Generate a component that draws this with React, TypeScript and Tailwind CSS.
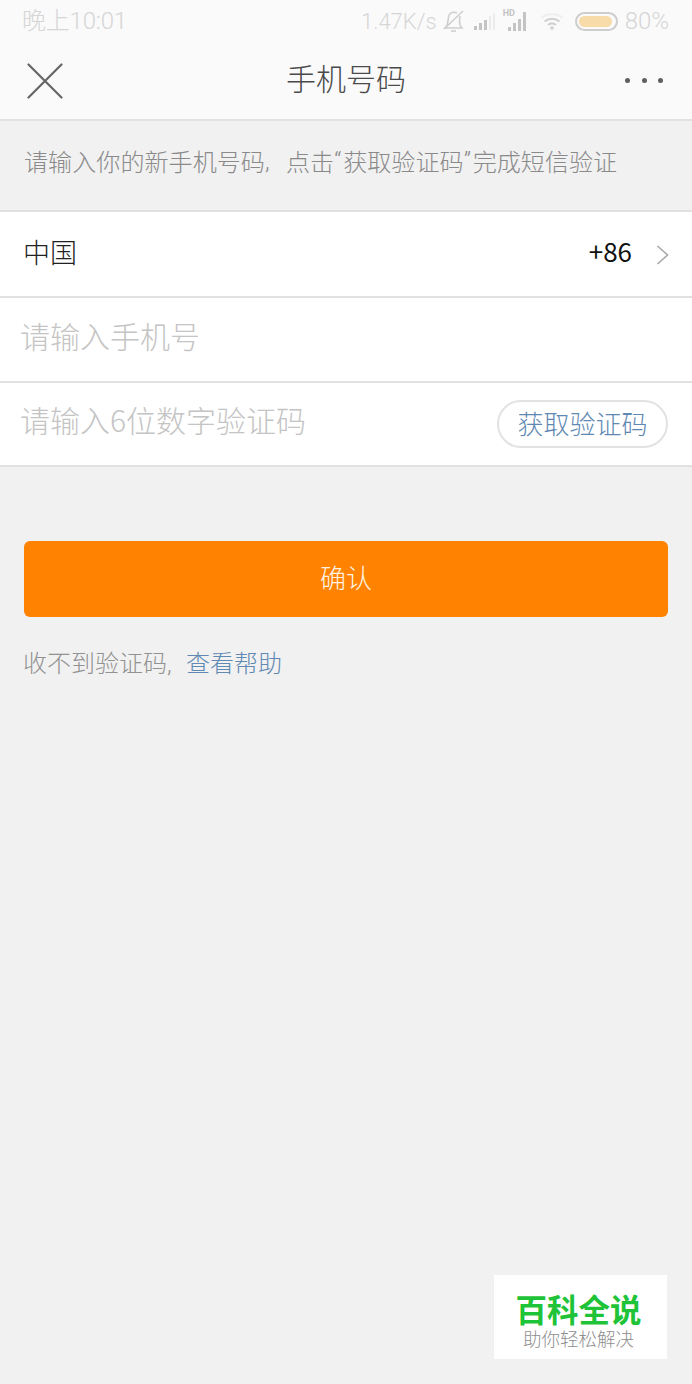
const StatusBar = () => (
  <div className="h-[42px] flex items-center justify-between pl-[22px] pr-[23px] text-[24px] text-[#d6d6d6] font-light font-['Roboto','Noto_Sans_CJK_SC',sans-serif]">
    <span className="-tracking-[0.2px]">晚上10:01</span>
    <div className="flex items-center">
      <span className="text-[22px]">1.47K/s</span>
      {/* bell off */}
      <svg width="24" height="24" viewBox="0 0 24 24" fill="none" stroke="#cfcfcf" strokeWidth="1.600" className="ml-[5px]">
        <path d="M2 20 L21 2" />
        <path d="M2 19 h18 c-2-2-2.500-4-2.500-7 l0.500-5 M15 4 c-4-2-8 0-8.500 4 c-0.300 4-1 8-3 11" />
        <path d="M9 22 h5" />
      </svg>
      {/* signal 1 */}
      <svg width="24" height="20" viewBox="0 0 24 20" className="ml-[7px]">
        <rect x="1" y="15" width="3" height="4" fill="#c4c4c4" />
        <rect x="6" y="12" width="3" height="7" fill="#c4c4c4" />
        <rect x="11" y="9" width="3" height="10" fill="#c4c4c4" />
        <rect x="16" y="5" width="2" height="14" fill="#ececec" />
        <rect x="20" y="2" width="2" height="17" fill="#ececec" />
      </svg>
      {/* signal 2 with HD */}
      <div className="relative w-[26px] h-[24px] ml-[6px]">
        <span className="absolute left-0 top-[-2px] text-[9px] leading-[12px] font-bold text-[#c4c4c4]">HD</span>
        <svg width="26" height="24" viewBox="0 0 26 24" className="absolute inset-0">
          <rect x="5" y="18" width="3" height="4" fill="#c4c4c4" />
          <rect x="10" y="14" width="3" height="8" fill="#c4c4c4" />
          <rect x="15" y="10" width="3" height="12" fill="#c4c4c4" />
          <rect x="20" y="3" width="3" height="19" fill="#c4c4c4" />
        </svg>
      </div>
      {/* wifi */}
      <svg width="26" height="20" viewBox="0 0 26 20" fill="none" className="ml-[10px]">
        <path d="M2 7 C8 2 18 2 24 7" stroke="#eeeeee" strokeWidth="2" />
        <path d="M5.500 10.500 C10 6.800 16 6.800 20.500 10.500" stroke="#cfcfcf" strokeWidth="2" />
        <path d="M9 14 C11.500 12 14.500 12 17 14" stroke="#cfcfcf" strokeWidth="2" />
        <circle cx="13" cy="17" r="1.800" fill="#cfcfcf" />
      </svg>
      {/* battery */}
      <div className="ml-[10px] w-[43px] h-[19px] rounded-full border-2 border-[#cdcdcd] p-[2px]">
        <div className="w-[33px] h-full rounded-full bg-[#f7dca9]" />
      </div>
      <span className="ml-[7px] text-[24px]">80%</span>
    </div>
  </div>
);

const NavBar = () => (
  <div className="h-[79px] flex items-center justify-between pl-[27px] pr-[29px] border-b-2 border-[#e1e1e1]">
    <svg width="36" height="36" viewBox="0 0 36 36" stroke="#666666" strokeWidth="2.200" strokeLinecap="round">
      <path d="M1.500 1.500 L34.500 34.500 M34.500 1.500 L1.500 34.500" />
    </svg>
    <span className="text-[30px] leading-none text-[#4a4a4a] font-light mb-[8px] ml-[4px]">手机号码</span>
    <div className="flex items-center gap-[11.500px]">
      <div className="w-[5px] h-[5px] rounded-full bg-[#5f5f5f]" />
      <div className="w-[5px] h-[5px] rounded-full bg-[#5f5f5f]" />
      <div className="w-[5px] h-[5px] rounded-full bg-[#5f5f5f]" />
    </div>
  </div>
);

const App = () => {
  return (
    <div className="relative w-[692px] h-[1384px] bg-[#f1f1f1] overflow-hidden font-['Noto_Sans_CJK_SC','Noto_Sans',sans-serif]">
      <div className="bg-[#fafafa]">
        <StatusBar />
        <NavBar />
      </div>

      {/* hint */}
      <div className="h-[89px] flex items-center pl-[24px] pb-[8px] text-[24.100px] text-[#8a8a8a] font-light whitespace-nowrap">
        请输入你的新手机号码
        <span className="inline-block w-[21px] font-['Roboto']">,</span>
        点击
        <span className="inline-block w-[9px] font-['Roboto']">“</span>
        获取验证码
        <span className="inline-block w-[9px] font-['Roboto']">”</span>
        完成短信验证
      </div>

      {/* form */}
      <div className="bg-white border-t-2 border-[#e1e1e1]">
        <div className="h-[86px] flex items-center justify-between pl-[23px] pr-[23px] border-b-2 border-[#e1e1e1]">
          <span className="text-[27px] text-[#222222] font-light mb-[4px]">中国</span>
          <div className="flex items-center mb-[8px]">
            <span className="text-[26px] text-[#111111]">+86</span>
            <svg width="13" height="20" viewBox="0 0 13 20" fill="none" stroke="#a8a8a8" strokeWidth="1.600" className="ml-[24px] mt-[10px]">
              <path d="M1.500 1 L11.500 10 L1.500 19" />
            </svg>
          </div>
        </div>
        <div className="h-[85px] flex items-center pl-[20px] border-b-2 border-[#e1e1e1]">
          <span className="text-[30px] text-[#c4c4c4] font-light mb-[8px]">请输入手机号</span>
        </div>
        <div className="h-[84px] flex items-center justify-between pl-[20px] pr-[24px] border-b-2 border-[#e1e1e1]">
          <span className="text-[30px] text-[#c4c4c4] font-light mb-[10px]">请输入6位数字验证码</span>
          <div className="w-[171px] h-[48px] rounded-full border-2 border-[#e2e2e2] flex items-center justify-center pb-[4px] text-[26px] text-[#5f89b3] font-light">
            获取验证码
          </div>
        </div>
      </div>

      {/* confirm */}
      <div className="mt-[74px] mx-[24px] h-[76px] rounded-[6px] bg-[#ff8200] flex items-center justify-center pb-[6px] text-[26px] text-[#fff3e0] font-light">
        确认
      </div>

      <p className="mt-[27px] pl-[23px] text-[24px] leading-[36px] text-[#929292] font-light whitespace-nowrap">
        收不到验证码
        <span className="inline-block w-[19px] font-['Roboto']">,</span>
        <span className="text-[#5f89b3]">查看帮助</span>
      </p>

      {/* watermark */}
      <div className="absolute left-[494px] top-[1275px] w-[173px] h-[84px] bg-white flex flex-col items-center pt-[17px] pr-[4px]">
        <span className="text-[31.500px] leading-[32px] font-bold text-[#1ec337]">百科全说</span>
        <span className="text-[18.500px] leading-[22px] mt-[3px] text-[#8e8e8e] font-light">助你轻松解决</span>
      </div>
    </div>
  );
};

export default App;
